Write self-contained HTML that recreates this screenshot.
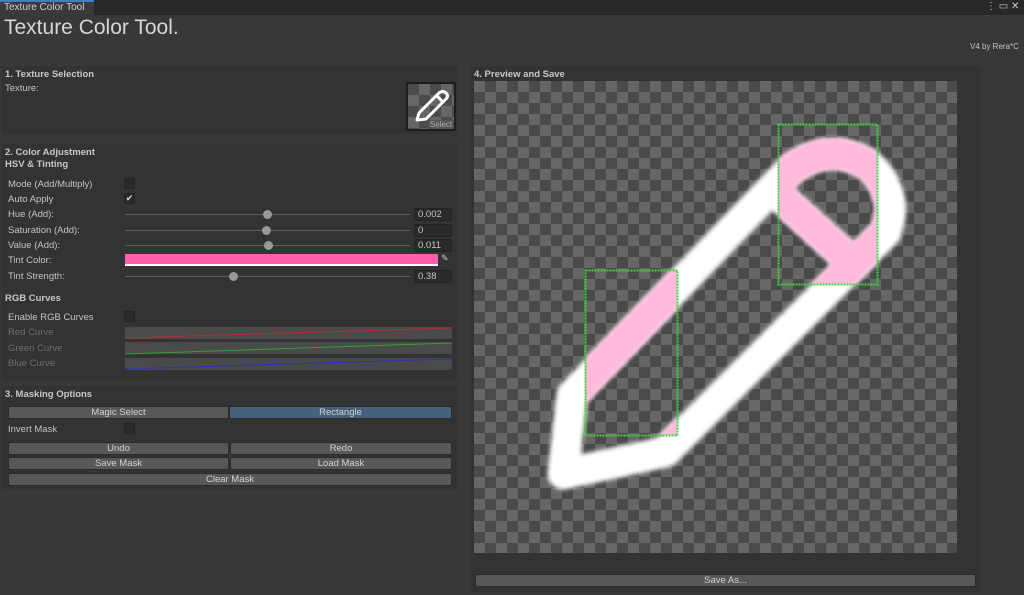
<!DOCTYPE html>
<html><head><meta charset="utf-8"><style>
*{margin:0;padding:0;box-sizing:border-box}
body{width:1024px;height:595px;background:#383838;font-family:"Liberation Sans",sans-serif;font-size:9.5px;color:#c4c4c4;position:relative;overflow:hidden}
.a{position:absolute}
.box{position:absolute;background:#333;}
.h{font-weight:bold;color:#c8c8c8}
.lbl{position:absolute;left:8px}
.dim{color:#6e6e6e}
.cb{position:absolute;left:124px;width:11px;height:11px;background:#2a2a2a;border:1px solid #222;border-radius:2px}
.tr{position:absolute;left:125px;width:285px;height:1px;background:#5e5e5e}
.kn{position:absolute;width:9px;height:9px;border-radius:50%;background:#999}
.num{position:absolute;left:414px;width:38px;height:13px;background:#2a2a2a;border:1px solid #222;border-radius:2px;padding-left:3px;line-height:12px;color:#c4c4c4}
.btn{position:absolute;height:13px;background:#585858;border:1px solid #2b2b2b;border-radius:2px;text-align:center;line-height:11px;color:#d2d2d2}
.cv{position:absolute;left:125px;width:327px;height:12px;background:#4a4a4a}
</style></head><body>
<div class="a" style="left:0;top:0;width:1024px;height:15px;background:#282828"></div>
<div class="a" style="left:0;top:0;width:94px;height:15px;background:#3a3a3a;border-top:2px solid #3d80c6"></div>
<div class="a" style="left:4px;top:2px;font-size:10px;color:#d0d0d0">Texture Color Tool</div>
<div class="a" style="left:986px;top:1px;font-size:10px;color:#ccc">⋮ ▭ ✕</div>
<div class="a" style="left:4px;top:16px;font-size:21px;color:#d6d6d6">Texture Color Tool.</div>
<div class="a" style="left:970px;top:42px;font-size:8px;color:#c4c4c4">V4 by Rera*C</div>

<div class="box" style="left:2px;top:66px;width:456px;height:68px"></div>
<div class="a h" style="left:5px;top:69px">1. Texture Selection</div>
<div class="a" style="left:5px;top:83px">Texture:</div>
<div class="a" style="left:406px;top:82px;width:50px;height:49px;background:#1e1e1e;padding:2px">
 <div style="width:46px;height:45px;background:conic-gradient(#666 25%,#4b4b4b 0 50%,#666 0 75%,#4b4b4b 0) 0 0/22px 22px;position:relative">
 <svg width="46" height="45" style="position:absolute;left:0;top:0"><path d="M9 36 L11 29 L31 9 Q35 6 38 9 Q41 12 38 15 L18 35 Z M29 12 L35 18" fill="none" stroke="#fff" stroke-width="3" stroke-linejoin="round"/></svg>
 <div style="position:absolute;right:0;bottom:0;width:26px;height:9px;background:#555;font-size:8px;line-height:9px;text-align:center;color:#aaa">Select</div></div></div>

<div class="box" style="left:2px;top:144px;width:456px;height:236px"></div>
<div class="a h" style="left:5px;top:147px">2. Color Adjustment</div>
<div class="a h" style="left:5px;top:159px">HSV &amp; Tinting</div>
<div class="lbl" style="top:179px">Mode (Add/Multiply)</div><div class="cb" style="top:178px"></div>
<div class="lbl" style="top:194px">Auto Apply</div><div class="cb" style="top:193px;font-size:9px;line-height:9px;text-align:center;color:#ddd">✔</div>
<div class="lbl" style="top:209px">Hue (Add):</div><div class="tr" style="top:214px"></div><div class="kn" style="left:263px;top:210px"></div><div class="num" style="top:208px">0.002</div>
<div class="lbl" style="top:225px">Saturation (Add):</div><div class="tr" style="top:230px"></div><div class="kn" style="left:262px;top:226px"></div><div class="num" style="top:224px">0</div>
<div class="lbl" style="top:240px">Value (Add):</div><div class="tr" style="top:245px"></div><div class="kn" style="left:264px;top:241px"></div><div class="num" style="top:239px">0.011</div>
<div class="lbl" style="top:255px">Tint Color:</div><div class="a" style="left:125px;top:254px;width:313px;height:12px;background:#ff5fac;border-bottom:2px solid #fff"></div><div class="a" style="left:441px;top:253px;font-size:9px;color:#ccc">✎</div>
<div class="lbl" style="top:271px">Tint Strength:</div><div class="tr" style="top:276px"></div><div class="kn" style="left:229px;top:272px"></div><div class="num" style="top:270px">0.38</div>
<div class="a h" style="left:5px;top:293px">RGB Curves</div>
<div class="lbl" style="top:312px">Enable RGB Curves</div><div class="cb" style="top:311px"></div>
<div class="lbl dim" style="top:327px">Red Curve</div><div class="cv" style="top:327px"></div>
<div class="lbl dim" style="top:343px">Green Curve</div><div class="cv" style="top:342px"></div>
<div class="lbl dim" style="top:358px">Blue Curve</div><div class="cv" style="top:358px"></div>
<svg class="a" style="left:125px;top:327px" width="327" height="44"><line x1="0" y1="11" x2="327" y2="1" stroke="#b03030"/><line x1="0" y1="27" x2="327" y2="16" stroke="#30a030"/><line x1="0" y1="42" x2="327" y2="32" stroke="#3030b0"/></svg>

<div class="box" style="left:2px;top:386px;width:456px;height:104px"></div>
<div class="a h" style="left:5px;top:389px">3. Masking Options</div>
<div class="btn" style="left:8px;top:406px;width:221px">Magic Select</div>
<div class="btn" style="left:229px;top:406px;width:223px;background:#46607e">Rectangle</div>
<div class="lbl" style="top:424px">Invert Mask</div><div class="cb" style="top:423px"></div>
<div class="btn" style="left:8px;top:442px;width:221px">Undo</div>
<div class="btn" style="left:230px;top:442px;width:222px">Redo</div>
<div class="btn" style="left:8px;top:457px;width:221px">Save Mask</div>
<div class="btn" style="left:230px;top:457px;width:222px">Load Mask</div>
<div class="btn" style="left:8px;top:473px;width:444px">Clear Mask</div>

<div class="box" style="left:470px;top:66px;width:510px;height:526px"></div>
<div class="a h" style="left:474px;top:69px">4. Preview and Save</div>
<div class="a" style="left:474px;top:81px;width:483px;height:472px;background:conic-gradient(#4a4a4a 25%,#666 0 50%,#4a4a4a 0 75%,#666 0) 0 0/22px 22px"></div>
<svg class="a" style="left:0;top:0" width="1024" height="595">
<defs><filter id="b"><feGaussianBlur stdDeviation="2.2"/></filter>
<clipPath id="c"><rect x="585" y="270" width="92" height="165"/><rect x="778" y="124" width="99" height="160"/></clipPath></defs>
<g filter="url(#b)" fill="none" stroke="#fff" stroke-width="31" stroke-linejoin="round" stroke-linecap="round">
<path d="M572 395 L790 170 Q830 140 870 166 Q900 195 886 232 L665 452 L563 474 Z"/>
<path d="M775 192 L852 262"/>
</g>
<g clip-path="url(#c)" filter="url(#b)" fill="none" stroke="#ffbadc" stroke-width="31" stroke-linejoin="round" stroke-linecap="round">
<path d="M572 395 L790 170 Q830 140 870 166 Q900 195 886 232 L665 452 L563 474 Z"/>
<path d="M775 192 L852 262"/>
</g>
<rect x="585.5" y="270.5" width="92" height="165" fill="none" stroke="#3fd23f" stroke-width="2" stroke-dasharray="2 1"/>
<rect x="778.5" y="124.5" width="99" height="160" fill="none" stroke="#3fd23f" stroke-width="2" stroke-dasharray="2 1"/>
</svg>
<div class="btn" style="left:475px;top:574px;width:501px">Save As...</div>
</body></html>
